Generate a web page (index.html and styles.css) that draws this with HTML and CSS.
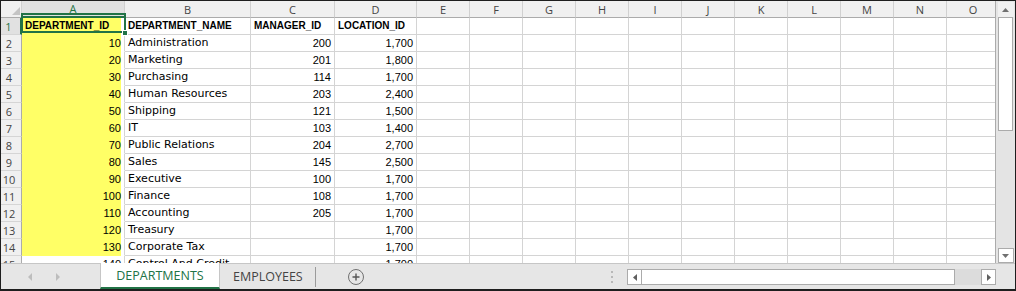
FILE: index.html
```html
<!DOCTYPE html>
<html lang="en">
<head>
  <meta charset="UTF-8">
  <title>DEPARTMENTS</title>
  <link rel="stylesheet" href="styles.css">
</head>
<body>
<div class="window">
  <div class="main">
    <div class="grid">
      <table class="sheet">
        <colgroup>
          <col class="c-rn"><col class="c-a"><col class="c-b"><col class="c-c"><col class="c-d">
          <col class="c-x"><col class="c-x"><col class="c-x"><col class="c-x"><col class="c-x"><col class="c-x">
          <col class="c-x"><col class="c-x"><col class="c-x"><col class="c-x"><col class="c-x">
        </colgroup>
        <thead>
          <tr>
            <th class="corner"><svg width="8" height="8" viewBox="0 0 8 8"><path d="M8 0V8H0z" fill="#c4c4c4"/></svg></th>
            <th class="sel">A</th><th>B</th><th>C</th><th>D</th><th>E</th><th>F</th><th>G</th><th>H</th>
            <th>I</th><th>J</th><th>K</th><th>L</th><th>M</th><th>N</th><th>O</th>
          </tr>
        </thead>
        <tbody>
          <tr><th class="sel">1</th><td class="a hd">DEPARTMENT_ID</td><td class="hd">DEPARTMENT_NAME</td><td class="hd">MANAGER_ID</td><td class="hd">LOCATION_ID</td><td></td><td></td><td></td><td></td><td></td><td></td><td></td><td></td><td></td><td></td><td></td></tr>
          <tr><th>2</th><td class="a n">10</td><td class="t">Administration</td><td class="n">200</td><td class="n">1,700</td><td></td><td></td><td></td><td></td><td></td><td></td><td></td><td></td><td></td><td></td><td></td></tr>
          <tr><th>3</th><td class="a n">20</td><td class="t">Marketing</td><td class="n">201</td><td class="n">1,800</td><td></td><td></td><td></td><td></td><td></td><td></td><td></td><td></td><td></td><td></td><td></td></tr>
          <tr><th>4</th><td class="a n">30</td><td class="t">Purchasing</td><td class="n">114</td><td class="n">1,700</td><td></td><td></td><td></td><td></td><td></td><td></td><td></td><td></td><td></td><td></td><td></td></tr>
          <tr><th>5</th><td class="a n">40</td><td class="t">Human Resources</td><td class="n">203</td><td class="n">2,400</td><td></td><td></td><td></td><td></td><td></td><td></td><td></td><td></td><td></td><td></td><td></td></tr>
          <tr><th>6</th><td class="a n">50</td><td class="t">Shipping</td><td class="n">121</td><td class="n">1,500</td><td></td><td></td><td></td><td></td><td></td><td></td><td></td><td></td><td></td><td></td><td></td></tr>
          <tr><th>7</th><td class="a n">60</td><td class="t">IT</td><td class="n">103</td><td class="n">1,400</td><td></td><td></td><td></td><td></td><td></td><td></td><td></td><td></td><td></td><td></td><td></td></tr>
          <tr><th>8</th><td class="a n">70</td><td class="t">Public Relations</td><td class="n">204</td><td class="n">2,700</td><td></td><td></td><td></td><td></td><td></td><td></td><td></td><td></td><td></td><td></td><td></td></tr>
          <tr><th>9</th><td class="a n">80</td><td class="t">Sales</td><td class="n">145</td><td class="n">2,500</td><td></td><td></td><td></td><td></td><td></td><td></td><td></td><td></td><td></td><td></td><td></td></tr>
          <tr><th>10</th><td class="a n">90</td><td class="t">Executive</td><td class="n">100</td><td class="n">1,700</td><td></td><td></td><td></td><td></td><td></td><td></td><td></td><td></td><td></td><td></td><td></td></tr>
          <tr><th>11</th><td class="a n">100</td><td class="t">Finance</td><td class="n">108</td><td class="n">1,700</td><td></td><td></td><td></td><td></td><td></td><td></td><td></td><td></td><td></td><td></td><td></td></tr>
          <tr><th>12</th><td class="a n">110</td><td class="t">Accounting</td><td class="n">205</td><td class="n">1,700</td><td></td><td></td><td></td><td></td><td></td><td></td><td></td><td></td><td></td><td></td><td></td></tr>
          <tr><th>13</th><td class="a n">120</td><td class="t">Treasury</td><td class="n"></td><td class="n">1,700</td><td></td><td></td><td></td><td></td><td></td><td></td><td></td><td></td><td></td><td></td><td></td></tr>
          <tr><th>14</th><td class="a n">130</td><td class="t">Corporate Tax</td><td class="n"></td><td class="n">1,700</td><td></td><td></td><td></td><td></td><td></td><td></td><td></td><td></td><td></td><td></td><td></td></tr>
          <tr><th>15</th><td class="n">140</td><td class="t">Control And Credit</td><td class="n"></td><td class="n">1,700</td><td></td><td></td><td></td><td></td><td></td><td></td><td></td><td></td><td></td><td></td><td></td></tr>
        </tbody>
      </table>
      <!-- active cell A1 -->
      <div class="cursor"></div>
      <div class="handle"></div>
    </div>

    <div class="vscroll">
      <div class="vbtn up"><svg width="7" height="4" viewBox="0 0 7 4"><path d="M0 4L3.5 0L7 4z" fill="#707070"/></svg></div>
      <div class="vthumb"></div>
      <div class="vtrack"></div>
      <div class="vbtn down"><svg width="7" height="4" viewBox="0 0 7 4"><path d="M0 0L3.5 4L7 0z" fill="#707070"/></svg></div>
    </div>
  </div>

  <div class="tabbar">
    <div class="tab-nav">
      <span class="arr left"></span>
      <span class="arr right"></span>
    </div>
    <div class="tab active">DEPARTMENTS</div>
    <div class="tab">EMPLOYEES</div>
    <span class="tab-sep"></span>
    <span class="add">
      <svg width="16" height="16" viewBox="0 0 16 16"><circle cx="8" cy="8" r="7.5" fill="none" stroke="#707070"/><path d="M8 4.5V11.5M4.5 8H11.5" stroke="#555" stroke-width="1.4"/></svg>
    </span>
    <span class="spacer"></span>
    <span class="dots"><i></i><i></i><i></i></span>
    <div class="hscroll">
      <div class="hbtn"><svg width="4" height="7" viewBox="0 0 4 7"><path d="M4 0L0 3.5L4 7z" fill="#606060"/></svg></div>
      <div class="hthumb"></div>
      <div class="htrack"></div>
      <div class="hbtn"><svg width="4" height="7" viewBox="0 0 4 7"><path d="M0 0L4 3.5L0 7z" fill="#606060"/></svg></div>
    </div>
    <span class="corner-box"></span>
  </div>
</div>
</body>
</html>
```

FILE: styles.css
```css
body { margin: 0; background: #fff; }
.window { width: 1016px; height: 291px; box-sizing: border-box; border: 1px solid #1e1e1e; border-bottom-width: 2px; display: flex; flex-direction: column; overflow: hidden; }
.main { display: flex; height: 262px; }
.grid { position: relative; flex: 1; overflow: hidden; }

/* sheet */
.sheet { border-collapse: separate; border-spacing: 0; table-layout: fixed; width: 999px; font: 11px "Liberation Sans", Arial, sans-serif; color: #000; }
.c-rn { width: 21px; }
.c-a { width: 103px; }
.c-b { width: 126px; }
.c-c { width: 84px; }
.c-d { width: 82px; }
.c-x { width: 53px; }
.sheet th, .sheet td { box-sizing: border-box; height: 17px; padding: 0 3px; border-right: 1px solid #d4d4d4; border-bottom: 1px solid #d4d4d4; white-space: nowrap; overflow: hidden; line-height: 16px; text-align: left; vertical-align: bottom; }
.sheet thead th { height: 16px; background: #f0f0f0; color: #444; font: 11px "Open Sans", sans-serif; text-align: center; line-height: 15px; border-right-color: #d0d0d0; border-bottom-color: #ababab; }
.sheet tbody th { background: #f0f0f0; color: #444; font: 11px "Open Sans", sans-serif; text-align: center; padding: 0 4px 0 0; border-right-color: #ababab; border-bottom-color: #d5d5d5; }
.sheet th.sel { background: #e1e1e1; color: #217346; }
.sheet thead th.sel { border-bottom: 2px solid #217346; }
.sheet tbody th.sel { border-right: 2px solid #217346; }
.sheet th.corner { text-align: right; vertical-align: bottom; padding: 0 1px 2px 0; line-height: 0; }
.sheet td.n { text-align: right; }
.sheet td.t { font-family: "DejaVu Sans", sans-serif; }
.sheet td.hd { font-weight: bold; font-size: 10px; }
.sheet td.a { background: linear-gradient(90deg, #ffff66 99px, #fff 99px); border-bottom-color: transparent; }

.cursor { position: absolute; left: 20px; top: 12px; width: 105px; height: 20px; box-sizing: border-box; border: 2px solid #217346; }
.handle { position: absolute; left: 121px; top: 29px; width: 6px; height: 6px; box-sizing: border-box; background: #217346; border: 1px solid #fff; }

/* vertical scrollbar */
.vscroll { width: 20px; box-sizing: border-box; border-left: 1px solid #ababab; background: #e4e4e4; display: flex; flex-direction: column; align-items: center; }
.vbtn { width: 16px; height: 15px; box-sizing: border-box; display: flex; align-items: center; justify-content: center; }
.vbtn.up { background: #f0f0f0; margin-top: 1px; }
.vbtn.down { background: #fff; border: 1px solid #ababab; margin-bottom: 0; }
.vthumb { width: 15px; height: 114px; box-sizing: border-box; background: #fff; border: 1px solid #ababab; }
.vtrack { flex: 1; }

/* sheet tabs */
.tabbar { flex: 1; display: flex; align-items: stretch; background: #e6e6e6; border-top: 1px solid #c6c6c6; font: 12.5px "Open Sans", sans-serif; color: #444; }
.tab-nav { width: 99px; display: flex; align-items: center; }
.arr { width: 0; height: 0; border-top: 4px solid transparent; border-bottom: 4px solid transparent; }
.arr.left { margin-left: 27px; border-right: 4px solid #bdbdbd; }
.arr.right { margin-left: 24px; border-left: 4px solid #bdbdbd; }
.tab { display: flex; align-items: center; padding: 0 13px 1px; }
.tab.active { width: 120px; box-sizing: border-box; justify-content: center; background: #fff; color: #217346; border-left: 1px solid #c6c6c6; border-right: 1px solid #c6c6c6; border-bottom: 2px solid #217346; margin-top: -1px; padding: 0; }
.tab-sep { width: 1px; background: #9b9b9b; margin: 3px 0 2px -1px; }
.add { display: flex; align-items: center; margin-left: 32px; }
.spacer { flex: 1; }
.dots { display: flex; flex-direction: column; justify-content: center; gap: 3px; margin-right: 14px; }
.dots i { display: block; width: 2px; height: 2px; background: #b8b8b8; }
.hscroll { width: 369px; height: 16px; align-self: center; margin-top: 1px; display: flex; box-sizing: border-box; background: #dcdcdc; }
.hbtn { width: 15px; box-sizing: border-box; background: #fff; border: 1px solid #ababab; display: flex; align-items: center; justify-content: center; }
.hthumb { width: 313px; box-sizing: border-box; background: #fff; border: 1px solid #ababab; border-left: 0; }
.htrack { flex: 1; }
.corner-box { width: 19px; }
```
